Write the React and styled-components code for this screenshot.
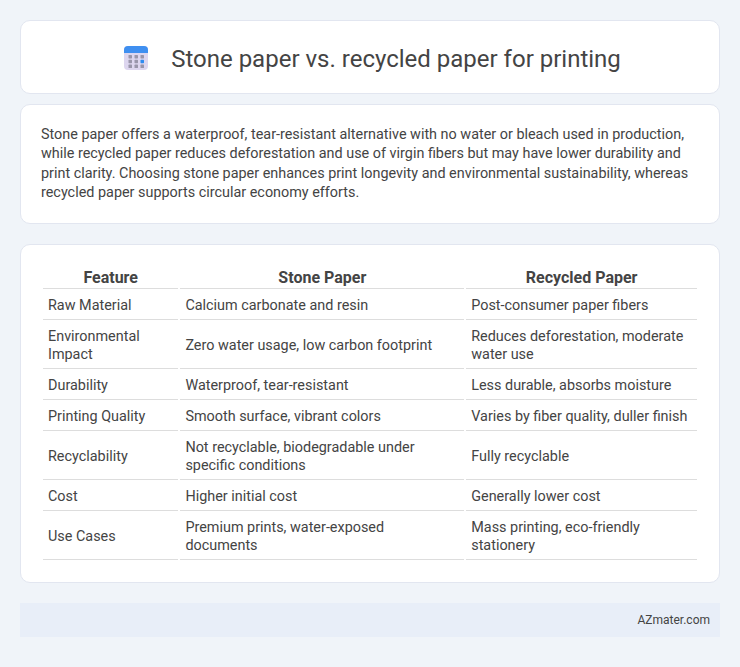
import React from "react";
import styled, { createGlobalStyle } from "styled-components";

const rows = [
  ["Raw Material", "Calcium carbonate and resin", "Post-consumer paper fibers"],
  ["Environmental Impact", "Zero water usage, low carbon footprint", "Reduces deforestation, moderate water use"],
  ["Durability", "Waterproof, tear-resistant", "Less durable, absorbs moisture"],
  ["Printing Quality", "Smooth surface, vibrant colors", "Varies by fiber quality, duller finish"],
  ["Recyclability", "Not recyclable, biodegradable under specific conditions", "Fully recyclable"],
  ["Cost", "Higher initial cost", "Generally lower cost"],
  ["Use Cases", "Premium prints, water-exposed documents", "Mass printing, eco-friendly stationery"],
];

const GlobalStyle = createGlobalStyle`
  html, body {
    margin: 0;
    padding: 0;
    background: #f0f4f9;
  }
  body {
    font-family: Roboto, "Liberation Sans", sans-serif;
    color: #444;
  }
`;

const Page = styled.div`
  padding: 20px;
  display: flex;
  flex-direction: column;
`;

const Card = styled.section`
  background: #fff;
  border: 1px solid #e2e6f0;
  border-radius: 10px;
`;

const Header = styled(Card)`
  padding: 4px 0 0 5px;
  height: 68px;
  display: flex;
  align-items: center;
  justify-content: center;
  gap: 23px;
  margin-bottom: 10px;
`;

const Title = styled.h1`
  margin: 0;
  font-size: 24px;
  font-weight: 400;
  color: #444;
`;

const Intro = styled(Card)`
  padding: 20px;
  margin-bottom: 20px;
  p {
    margin: 0;
    font-size: 14.4px;
    line-height: 19.44px;
    color: #444;
  }
`;

const TableCard = styled(Card)`
  padding: 20px;
  margin-bottom: 20px;
`;

const Table = styled.table`
  width: 100%;
  border-collapse: separate;
  border-spacing: 2px;
  font-size: 14.4px;
  line-height: 18px;
  th {
    font-size: 16px;
    font-weight: 700;
    text-align: center;
    padding: 2px 5px 1px;
    border-bottom: 1px solid #ddd;
    line-height: 18px;
  }
  td {
    padding: 6px 5px 4px;
    border-bottom: 1px solid #ddd;
  }
`;

const Footer = styled.footer`
  background: #e8eef8;
  height: 34px;
  display: flex;
  align-items: center;
  justify-content: flex-end;
  padding: 0 10px;
  font-size: 12px;
  color: #444;
`;

const IconSvg = styled.svg`
  margin-top: -2px;
  flex-shrink: 0;
`;

const CalendarIcon = () => (
  <IconSvg width="24" height="24" viewBox="0 0 24 24">
    <rect x="0" y="0" width="24" height="24" rx="4" fill="#ddd6ef" />
    <path d="M0 7V4a4 4 0 0 1 4-4h16a4 4 0 0 1 4 4v3z" fill="#3f8ff0" />
    {[0, 1, 2].map((r) =>
      [0, 1, 2].map((c) => (
        <rect
          key={`${r}-${c}`}
          x={4.5 + c * 6}
          y={9 + r * 4.8}
          width="3.5"
          height="3.4"
          rx="0.6"
          fill={r === 1 && c === 2 ? "#2f8cf0" : "#9a96ab"}
        />
      ))
    )}
  </IconSvg>
);

const App = () => (
  <>
    <GlobalStyle />
    <Page>
      <Header>
        <CalendarIcon />
        <Title>Stone paper vs. recycled paper for printing</Title>
      </Header>
      <Intro>
        <p>
          Stone paper offers a waterproof, tear-resistant alternative with no water or bleach used in production, while recycled paper reduces deforestation and use of virgin fibers but may have lower durability and print clarity. Choosing stone paper enhances print longevity and environmental sustainability, whereas recycled paper supports circular economy efforts.
        </p>
      </Intro>
      <TableCard>
        <Table>
          <thead>
            <tr>
              <th>Feature</th>
              <th>Stone Paper</th>
              <th>Recycled Paper</th>
            </tr>
          </thead>
          <tbody>
            {rows.map((row) => (
              <tr key={row[0]}>
                {row.map((cell) => (
                  <td key={cell}>{cell}</td>
                ))}
              </tr>
            ))}
          </tbody>
        </Table>
      </TableCard>
      <Footer>AZmater.com</Footer>
    </Page>
  </>
);

export default App;
